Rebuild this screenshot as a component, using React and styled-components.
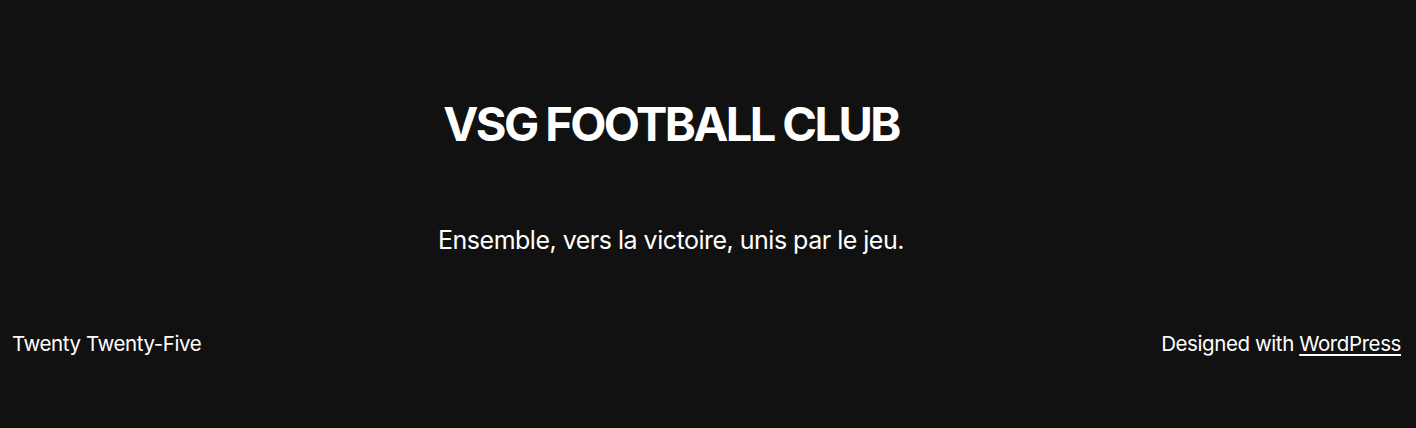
import React from 'react'
import styled, { createGlobalStyle } from 'styled-components'

const Global = createGlobalStyle`
  html, body {
    margin: 0;
    padding: 0;
    background: #111111;
  }
  body {
    font-family: Inter, "Noto Sans", sans-serif;
    color: #ffffff;
  }
`

const Page = styled.div`
  width: 1416px;
  height: 428px;
  background: #111111;
  display: flex;
  flex-direction: column;
`

const Hero = styled.section`
  display: flex;
  flex-direction: column;
  align-items: center;
  padding: 92px 74px 0 0;
`

const Title = styled.h1`
  margin: 0;
  font-size: 47px;
  line-height: 64px;
  font-weight: 700;
  letter-spacing: -0.055em;
`

const Tagline = styled.p`
  margin: 66px 0 0;
  font-size: 25px;
  line-height: 36px;
  font-weight: 400;
  letter-spacing: -0.02em;
`

const Footer = styled.footer`
  display: flex;
  justify-content: space-between;
  align-items: baseline;
  padding: 72px 15px 0 12px;
  font-size: 20.5px;
  line-height: 28px;
  letter-spacing: -0.02em;
`

const FootLink = styled.a`
  color: #ffffff;
  text-decoration: underline;
  text-underline-offset: 3px;
  text-decoration-thickness: 2px;
`

export default function App() {
  return (
    <Page>
      <Global />
      <Hero>
        <Title>VSG FOOTBALL CLUB</Title>
        <Tagline>Ensemble, vers la victoire, unis par le jeu.</Tagline>
      </Hero>
      <Footer>
        <span>Twenty Twenty-Five</span>
        <span>
          Designed with <FootLink href="#">WordPress</FootLink>
        </span>
      </Footer>
    </Page>
  )
}
